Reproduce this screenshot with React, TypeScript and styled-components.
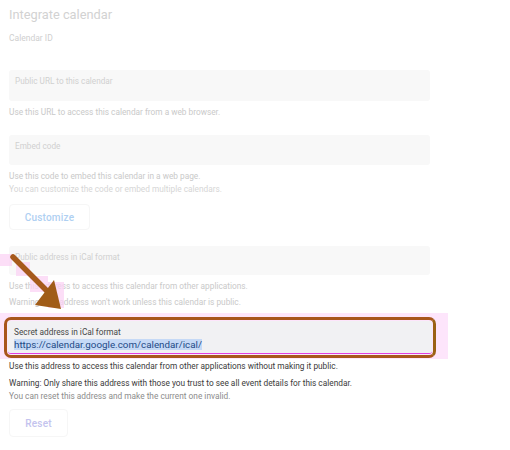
import React from "react";
import styled, { createGlobalStyle } from "styled-components";

const Global = createGlobalStyle`
  html, body { margin: 0; padding: 0; background: #ffffff; }
  body { font-family: Roboto, "Liberation Sans", Arial, sans-serif; }
  * { box-sizing: border-box; }
`;

const Page = styled.div`
  position: relative;
  width: 510px;
  height: 450px;
  overflow: hidden;
  padding: 7px 0 0 9px;
`;

const Title = styled.h2`
  margin: 0;
  font-size: 12.8px;
  line-height: 16px;
  font-weight: 400;
  color: #d2d2d2;
`;

const SubLabel = styled.div`
  margin-top: 9px;
  font-size: 8.5px;
  line-height: 12px;
  color: #cfcfcf;
`;

const Field = styled.div<{ $h: number; $mt: number }>`
  width: 421px;
  height: ${(p) => p.$h}px;
  margin-top: ${(p) => p.$mt}px;
  background: #f8f8f8;
  border-radius: 3px;
  padding: 5px 6px 0;
`;

const FieldLabel = styled.div`
  font-size: 8.2px;
  line-height: 12px;
  color: #d0d0d0;
`;

const Help = styled.p<{ $mt: number; $tone?: "faint" | "dark" }>`
  margin: ${(p) => p.$mt}px 0 0;
  font-size: 8.3px;
  line-height: 13px;
  color: ${(p) => (p.$tone === "dark" ? "#3a3a3a" : "#c9c9c9")};
  white-space: nowrap;
`;

const Help2 = styled.span<{ $color: string }>`
  display: block;
  color: ${(p) => p.$color};
`;

const GhostButton = styled.button<{ $w: number; $h: number; $mt: number; $color: string }>`
  display: flex;
  align-items: center;
  justify-content: center;
  width: ${(p) => p.$w}px;
  height: ${(p) => p.$h}px;
  margin-top: ${(p) => p.$mt}px;
  background: #ffffff;
  border: 1px solid #f6f6f6;
  border-radius: 4px;
  font-family: Roboto, "Liberation Sans", Arial, sans-serif;
  font-size: 10px;
  font-weight: 500;
  color: ${(p) => p.$color};
  padding: 0;
  letter-spacing: 0.2px;
`;

const Band = styled.div`
  margin: 4px 0 0 -9px;
  width: 448px;
  background: #fde5fb;
  padding: 4px 0 1px 4px;
`;

const Highlight = styled.div`
  width: 432px;
  border: 3px solid #a8561c;
  border-right-color: #9a6214;
  border-radius: 7px;
  padding: 1px;
  background: #fde5fb;
`;

const SecretField = styled.div`
  height: 33px;
  background: #f1f1f3;
  border-radius: 3px;
  border-bottom: 1.5px solid #e040e0;
  padding: 5px 6px 0;
`;

const SecretLabel = styled.div`
  font-size: 8.3px;
  line-height: 12px;
  color: #474747;
`;

const SecretUrl = styled.div`
  font-size: 9.8px;
  line-height: 13px;
  color: #1d4a86;
  span {
    background: #c5d9f6;
  }
`;

const Overlay = styled.svg`
  position: absolute;
  left: 0;
  top: 0;
  pointer-events: none;
`;

export default function App() {
  return (
    <>
      <Global />
      <Page>
        <Title>Integrate calendar</Title>
        <SubLabel>Calendar ID</SubLabel>

        <Field $h={31} $mt={26}>
          <FieldLabel>Public URL to this calendar</FieldLabel>
        </Field>
        <Help $mt={5}>Use this URL to access this calendar from a web browser.</Help>

        <Field $h={30} $mt={16}>
          <FieldLabel>Embed code</FieldLabel>
        </Field>
        <Help $mt={5}>
          Use this code to embed this calendar in a web page.
          <Help2 $color="#d6d6d6">You can customize the code or embed multiple calendars.</Help2>
        </Help>
        <GhostButton $w={81} $h={26} $mt={8} $color="#afd0f2">
          Customize
        </GhostButton>

        <Field $h={29} $mt={16}>
          <FieldLabel>Public address in iCal format</FieldLabel>
        </Field>
        <Help $mt={5}>Use this address to access this calendar from other applications.</Help>
        <Help $mt={3}>Warning: The address won't work unless this calendar is public.</Help>

        <Band>
          <Highlight>
            <SecretField>
              <SecretLabel>Secret address in iCal format</SecretLabel>
              <SecretUrl>
                <span>https://calendar.google.com/calendar/ical/</span>
              </SecretUrl>
            </SecretField>
          </Highlight>
        </Band>

        <Help $mt={1} $tone="dark">
          Use this address to access this calendar from other applications without making it public.
        </Help>
        <Help $mt={4} $tone="dark">
          Warning: Only share this address with those you trust to see all event details for this calendar.
          <Help2 $color="#8c8c8c">You can reset this address and make the current one invalid.</Help2>
        </Help>
        <GhostButton $w={59} $h={28} $mt={6} $color="#c3c3ee">
          Reset
        </GhostButton>

        <Overlay width={510} height={450} viewBox="0 0 510 450">
          <g fill="#fbd3f5" opacity={0.75}>
            <rect x={0} y={254} width={12} height={12} />
            <rect x={16} y={262} width={14} height={14} />
            <rect x={30} y={276} width={18} height={16} />
            <rect x={48} y={282} width={16} height={26} />
          </g>
          <line x1={13} y1={257} x2={47} y2={291} stroke="#a65a1c" strokeWidth={5.5} strokeLinecap="round" />
          <polygon points="35,305 54,280 61,309" fill="#a05c18" />
        </Overlay>
      </Page>
    </>
  );
}
